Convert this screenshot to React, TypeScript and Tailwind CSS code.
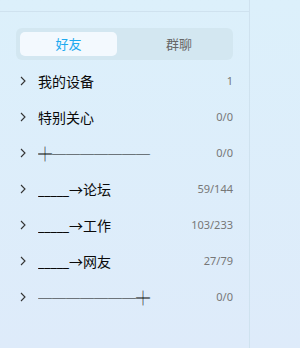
import React from "react";

const groups = [
  { name: "我的设备", count: "1" },
  { name: "特别关心", count: "0/0" },
  { name: "╪───────", count: "0/0" },
  { name: "_____→论坛", count: "59/144" },
  { name: "_____→工作", count: "103/233" },
  { name: "_____→网友", count: "27/79" },
  { name: "───────╪", count: "0/0" },
];

function Chevron() {
  return (
    <svg width="8" height="10" viewBox="0 0 8 10" className="shrink-0">
      <path d="M2 1 L6 5 L2 9" fill="none" stroke="#333" strokeWidth="1.1" />
    </svg>
  );
}

export default function App() {
  const [tab, setTab] = React.useState("friends");

  return (
    <div
      className="flex w-[300px] h-[348px] overflow-hidden bg-gradient-to-b from-[#dcf0fb] to-[#deebfa]"
      style={{ fontFamily: '"Noto Sans", "Noto Sans CJK SC", sans-serif' }}
    >
      <div className="w-[250px] shrink-0 border-r border-[#cfe2ef] flex flex-col">
        <div className="h-[12px] border-b border-[#cfe2ef]" />
        <div className="px-4 pt-4">
          <div className="flex h-8 rounded-md bg-[#d3e7f1] p-1">
            <button
              onClick={() => setTab("friends")}
              className={
                "w-[97px] rounded-[5px] text-[13px] leading-6 " +
                (tab === "friends" ? "bg-[#f3f9fe] text-[#1daaf0]" : "text-[#666]")
              }
            >
              好友
            </button>
            <button
              onClick={() => setTab("groups")}
              className={
                "flex-1 pl-3 rounded-[5px] text-[13px] leading-6 " +
                (tab === "groups" ? "bg-[#f3f9fe] text-[#1daaf0]" : "text-[#666]")
              }
            >
              群聊
            </button>
          </div>
        </div>
        <div className="flex flex-col pt-[3px]">
          {groups.map((g) => (
            <div key={g.name} className="flex items-center h-9 pl-[19px] pr-4">
              <Chevron />
              <span className="ml-[11px] flex-1 text-[14px] text-[#0a0a0a] whitespace-nowrap overflow-hidden">
                {g.name}
              </span>
              <span className="text-[11px] text-[#777]">{g.count}</span>
            </div>
          ))}
        </div>
      </div>
      <div className="flex-1" />
    </div>
  );
}
